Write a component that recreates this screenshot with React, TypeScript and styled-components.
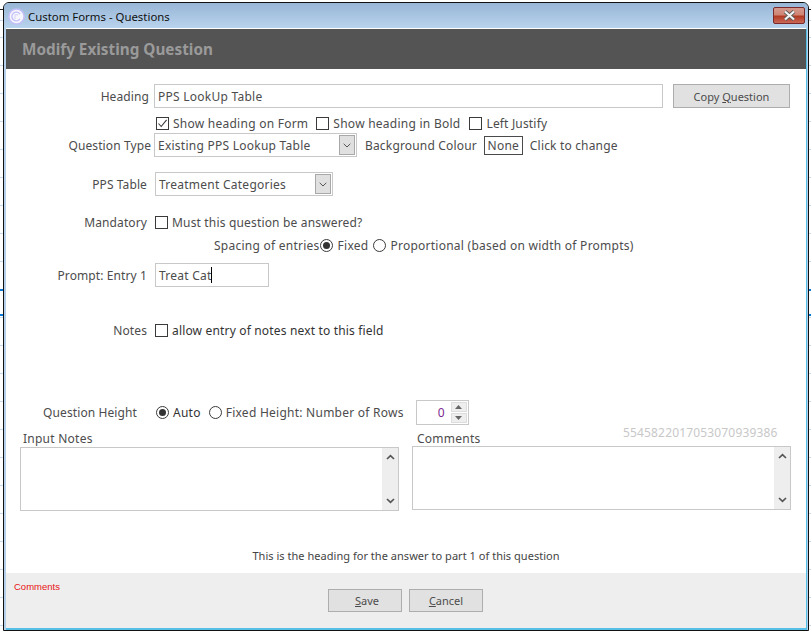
import React from 'react';
import styled, { createGlobalStyle } from 'styled-components';

const GlobalStyle = createGlobalStyle`
  html, body {
    margin: 0;
    padding: 0;
    height: 633px;
    overflow: hidden;
    background: #fff;
    font-family: "Noto Sans", "Open Sans", sans-serif;
    font-size: 12px;
    letter-spacing: 0.25px;
    color: #4c4c4c;
  }
`;

const Page = styled.div`
  position: relative;
  width: 811px;
  height: 633px;
  padding: 2px 0 0 3px;
  box-sizing: border-box;
  background:
    linear-gradient(#0a78d8, #0a78d8) 0 289px / 100% 2px no-repeat,
    linear-gradient(#0a78d8, #0a78d8) 0 314px / 100% 2px no-repeat,
    linear-gradient(#222, #222) 0 9px / 100% 1px no-repeat,
    repeating-linear-gradient(#fff 0 9px, #c5dcf0 9px 10px, #fff 10px 28px) 0 28px;
`;

const Window = styled.div`
  width: 806px;
  height: 629px;
  box-sizing: border-box;
  border: 1px solid #111;
  border-radius: 6px 6px 0 0;
  background: #b4d0ea;
  display: flex;
  flex-direction: column;
  overflow: hidden;
`;

const TitleBar = styled.div`
  flex: 0 0 25px;
  box-sizing: border-box;
  display: flex;
  align-items: center;
  gap: 3px;
  padding: 2px 3px 0 4px;
  background: linear-gradient(#98b6d6, #b8d3ed);
  color: #111;
`;

const TitleText = styled.div`
  flex: 1;
  font-size: 11.4px;
  letter-spacing: 0;
`;

const CloseButton = styled.div`
  width: 32px;
  height: 17px;
  margin-top: -3px;
  box-sizing: border-box;
  border: 1px solid #7a2a2a;
  border-radius: 2px;
  background: linear-gradient(#d49a8e 0, #cf8474 45%, #b23a22 55%, #c9695a 100%);
  display: flex;
  align-items: center;
  justify-content: center;
`;

const Client = styled.div`
  flex: 1;
  margin: 0 1px 0 2px;
  border-top: 1px solid #fff;
  border-bottom: 2px solid #55bfe8;
  border-right: 1px solid #55bfe8;
  background: #fff;
  display: flex;
  flex-direction: column;
  min-height: 0;
`;

const Header = styled.div`
  flex: 0 0 40px;
  display: flex;
  align-items: center;
  padding-left: 16px;
  background: #545454;
  color: #9a9a9a;
  font-size: 15.3px;
  font-weight: 700;
  letter-spacing: 0;
`;

const Form = styled.div`
  position: relative;
  flex: 1;
  display: flex;
  flex-direction: column;
  padding-top: 15px;
`;

const Row = styled.div<{ $top?: number; $height?: number; $left?: number }>`
  display: flex;
  align-items: center;
  height: ${p => p.$height ?? 24}px;
  margin-top: ${p => p.$top ?? 0}px;
  padding-left: ${p => p.$left ?? 0}px;
  white-space: nowrap;
`;

const Label = styled.div<{ $end: number; $gap: number }>`
  width: ${p => p.$end}px;
  margin-right: ${p => p.$gap}px;
  text-align: right;
  letter-spacing: 0.1px;
  flex: none;
`;

const Text = styled.span<{ $left?: number; $dark?: boolean; $tight?: boolean }>`
  margin-left: ${p => p.$left ?? 0}px;
  color: ${p => (p.$dark ? '#333' : 'inherit')};
  letter-spacing: ${p => (p.$tight ? '0.17px' : 'inherit')};
`;

const Field = styled.div<{ $width: number }>`
  width: ${p => p.$width}px;
  height: 24px;
  flex: none;
  box-sizing: border-box;
  border: 1px solid #c8c8c8;
  display: flex;
  align-items: center;
  padding-left: 3px;
  background: #fff;
`;

const Caret = styled.span`
  display: inline-block;
  width: 1px;
  height: 16px;
  margin-left: -1px;
  background: #000;
`;

const SelectField = styled(Field)`
  justify-content: space-between;
  padding-right: 1px;
`;

const SelectArrow = styled.div`
  width: 16px;
  height: 20px;
  box-sizing: border-box;
  border: 1px solid #a8a8a8;
  background: #e0e0e0;
  display: flex;
  align-items: center;
  justify-content: center;
`;

const Button = styled.div<{ $width: number; $height?: number; $left?: number; $inset?: number }>`
  width: ${p => p.$width}px;
  height: ${p => p.$height ?? 24}px;
  margin-left: ${p => p.$left ?? 0}px;
  padding-left: ${p => p.$inset ?? 0}px;
  flex: none;
  box-sizing: border-box;
  border: 1px solid #adadad;
  background: #e1e1e1;
  font-size: 11px;
  letter-spacing: 0;
  display: flex;
  align-items: center;
  justify-content: center;
`;

const Box = styled.span<{ $left?: number }>`
  width: 13px;
  height: 13px;
  margin-left: ${p => p.$left ?? 0}px;
  margin-right: 4px;
  flex: none;
  box-sizing: border-box;
  border: 1px solid #3a3a3a;
  background: #fff;
  display: flex;
  align-items: center;
  justify-content: center;
`;

const Radio = styled(Box)`
  border-radius: 50%;
`;

const RadioDot = styled.span`
  width: 7px;
  height: 7px;
  border-radius: 50%;
  background: #333;
`;

const ColourBox = styled.div`
  width: 39px;
  height: 19px;
  margin: 0 7px 0 7px;
  box-sizing: border-box;
  border: 1px solid #4a4a4a;
  display: flex;
  align-items: center;
  justify-content: center;
`;

const Spinner = styled.div`
  width: 53px;
  height: 25px;
  margin-left: 12px;
  box-sizing: border-box;
  border: 1px solid #c8c8c8;
  display: flex;
  align-items: center;
  justify-content: space-between;
  flex: none;
`;

const SpinValue = styled.span`
  flex: 1;
  text-align: right;
  padding-right: 6px;
  color: #7a2a90;
`;

const SpinButtons = styled.div`
  width: 16px;
  height: 21px;
  margin-right: 1px;
  display: flex;
  flex-direction: column;
  gap: 1px;
`;

const SpinButton = styled.div`
  flex: 1;
  background: #eee;
  border: 1px solid #ddd;
  box-sizing: border-box;
  display: flex;
  align-items: center;
  justify-content: center;
`;

const NotesHead = styled.div`
  display: grid;
  grid-template-columns: 394px 206px 1fr;
  height: 22px;
  padding-left: 17px;
`;

const NotesLabel = styled.div`
  align-self: end;
  line-height: 16px;
`;

const Serial = styled.div`
  align-self: start;
  color: #c8c8c8;
  line-height: 16px;
  letter-spacing: 0.16px;
`;

const NotesRow = styled.div`
  display: flex;
  align-items: flex-start;
  gap: 13px;
  padding-left: 14px;
`;

const NoteBox = styled.div<{ $raise?: number }>`
  width: 379px;
  height: 64px;
  margin-top: ${p => -(p.$raise ?? 0)}px;
  box-sizing: border-box;
  border: 1px solid #c8c8c8;
  display: flex;
  justify-content: flex-end;
  background: #fff;
`;

const ScrollTrack = styled.div`
  width: 16px;
  background: #eee;
  display: flex;
  flex-direction: column;
  justify-content: space-between;
  align-items: center;
  padding: 6px 0;
`;

const Hint = styled.div`
  margin-top: 37px;
  height: 16px;
  line-height: 16px;
  font-size: 11px;
  letter-spacing: 0.03px;
  text-align: center;
  color: #444;
`;

const Footer = styled.div`
  margin-top: auto;
  height: 55px;
  flex: none;
  box-sizing: border-box;
  background: #eee;
  display: flex;
  align-items: flex-start;
  position: relative;
  padding: 16px 0 0 322px;
  gap: 7px;
`;

const FooterNote = styled.div`
  position: absolute;
  left: 8px;
  top: 7px;
  color: #e81414;
  font-family: "Liberation Sans", Arial, sans-serif;
  font-size: 9.5px;
  letter-spacing: 0;
  line-height: 14px;
`;

const AppIcon = () => (
  <svg width="17" height="17" viewBox="0 0 17 17" fill="none">
    <circle cx="8.5" cy="8.5" r="7.6" fill="#f6f6ff" stroke="#c3bff6" strokeWidth="1.5" />
    <path d="M12 6.2A4.4 4.4 0 1 0 12 10.8" stroke="#c3bff6" strokeWidth="1.3" />
    <path d="M7 11V6.8h3" stroke="#d4d1f8" strokeWidth="1" />
  </svg>
);

const CloseIcon = () => (
  <svg width="15" height="11" viewBox="0 0 15 11">
    <path d="M3 1.5l9 8M12 1.5l-9 8" fill="none" stroke="#5a5a5a" strokeWidth="3.8" />
    <path d="M3 1.5l9 8M12 1.5l-9 8" fill="none" stroke="#f2f2f2" strokeWidth="2.2" />
  </svg>
);

const Chevron = () => (
  <svg width="8" height="5" viewBox="0 0 8 5" fill="none">
    <path d="M.7.8 4 4l3.3-3.2" stroke="#555" strokeWidth="1" />
  </svg>
);

const Check = () => (
  <svg width="11" height="11" viewBox="0 0 11 11" fill="none">
    <path d="M1.5 5.5 4.2 8.5 9.6 1.8" stroke="#3a3a3a" strokeWidth="1.1" />
  </svg>
);

const ScrollUp = () => (
  <svg width="9" height="6" viewBox="0 0 9 6" fill="none">
    <path d="M1 5 4.5 1.6 8 5" stroke="#555" strokeWidth="1.7" />
  </svg>
);

const ScrollDown = () => (
  <svg width="9" height="6" viewBox="0 0 9 6" fill="none">
    <path d="M1 1 4.5 4.4 8 1" stroke="#555" strokeWidth="1.7" />
  </svg>
);

const SpinArrow = ({ down }: { down?: boolean }) => (
  <svg width="7" height="4" viewBox="0 0 7 4">
    <path d={down ? 'M0 0h7L3.5 4z' : 'M0 4h7L3.5 0z'} fill="#666" />
  </svg>
);

const ScrollBox = ({ raise }: { raise?: number }) => (
  <NoteBox $raise={raise}>
    <ScrollTrack>
      <ScrollUp />
      <ScrollDown />
    </ScrollTrack>
  </NoteBox>
);

const App = () => (
  <Page>
    <GlobalStyle />
    <Window>
      <TitleBar>
        <AppIcon />
        <TitleText>Custom Forms - Questions</TitleText>
        <CloseButton><CloseIcon /></CloseButton>
      </TitleBar>
      <Client>
        <Header>Modify Existing Question</Header>
        <Form>
          <Row>
            <Label $end={143} $gap={5}>Heading</Label>
            <Field $width={509}>PPS LookUp Table</Field>
            <Button $width={117} $left={10}>Copy&nbsp;<u>Q</u>uestion</Button>
          </Row>
          <Row $top={5} $height={20} $left={150}>
            <Box><Check /></Box>
            <Text>Show heading on Form</Text>
            <Box $left={8} />
            <Text>Show heading in Bold</Text>
            <Box $left={9} />
            <Text $tight>Left Justify</Text>
          </Row>
          <Row>
            <Label $end={145} $gap={3}>Question Type</Label>
            <SelectField $width={203}>
              Existing PPS Lookup Table
              <SelectArrow><Chevron /></SelectArrow>
            </SelectField>
            <Text $left={8} $tight>Background Colour</Text>
            <ColourBox>None</ColourBox>
            <Text $tight>Click to change</Text>
          </Row>
          <Row $top={15}>
            <Label $end={141} $gap={8}>PPS Table</Label>
            <SelectField $width={178}>
              Treatment Categories
              <SelectArrow><Chevron /></SelectArrow>
            </SelectField>
          </Row>
          <Row $top={14}>
            <Label $end={141} $gap={8}>Mandatory</Label>
            <Box />
            <Text $tight>Must this question be answered?</Text>
          </Row>
          <Row $height={22} $left={208}>
            <Text>Spacing of entries</Text>
            <Radio><RadioDot /></Radio>
            <Text $left={1}>Fixed</Text>
            <Radio $left={5} />
            <Text>Proportional (based on width of Prompts)</Text>
          </Row>
          <Row $top={7}>
            <Label $end={141} $gap={8}>Prompt: Entry 1</Label>
            <Field $width={114}>Treat Cat<Caret /></Field>
          </Row>
          <Row $top={31}>
            <Label $end={141} $gap={8}>Notes</Label>
            <Box />
            <Text $dark $tight>allow entry of notes next to this field</Text>
          </Row>
          <Row $top={58} $height={25}>
            <Label $end={131} $gap={19}>Question Height</Label>
            <Radio><RadioDot /></Radio>
            <Text $dark>Auto</Text>
            <Radio $left={8} />
            <Text>Fixed Height: Number of Rows</Text>
            <Spinner>
              <SpinValue>0</SpinValue>
              <SpinButtons>
                <SpinButton><SpinArrow /></SpinButton>
                <SpinButton><SpinArrow down /></SpinButton>
              </SpinButtons>
            </Spinner>
          </Row>
          <NotesHead>
            <NotesLabel>Input Notes</NotesLabel>
            <NotesLabel>Comments</NotesLabel>
            <Serial>5545822017053070939386</Serial>
          </NotesHead>
          <NotesRow>
            <ScrollBox />
            <ScrollBox raise={1} />
          </NotesRow>
          <Hint>This is the heading for the answer to part 1 of this question</Hint>
          <Footer>
            <FooterNote>Comments</FooterNote>
            <Button $width={74} $height={23} $inset={4}><u>S</u>ave</Button>
            <Button $width={74} $height={23}><u>C</u>ancel</Button>
          </Footer>
        </Form>
      </Client>
    </Window>
  </Page>
);

export default App;
